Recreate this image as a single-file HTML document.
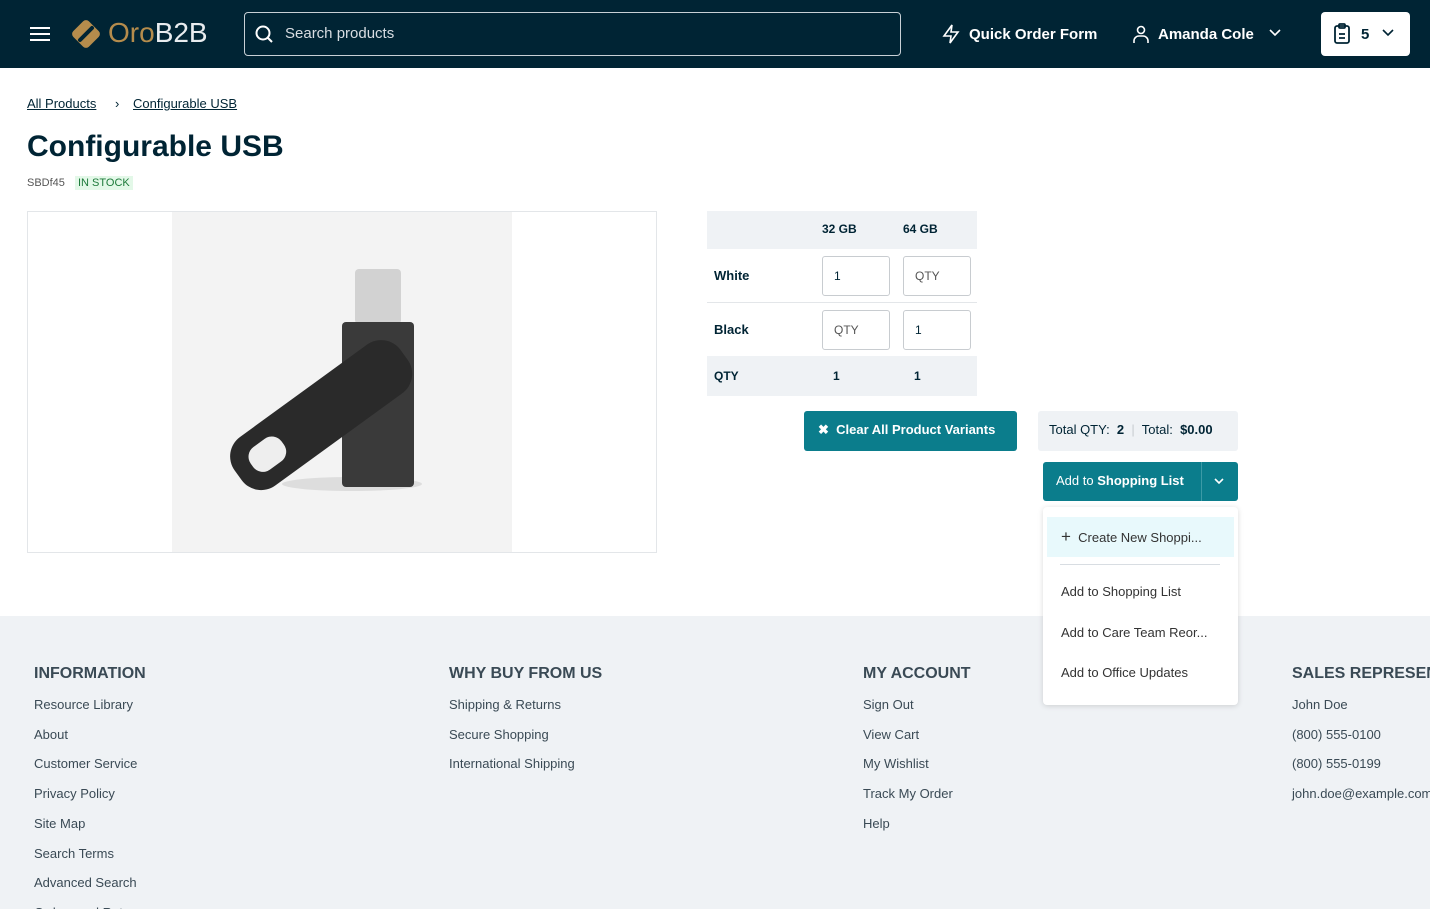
<!DOCTYPE html>
<html style="overflow:hidden;height:909px"><head><meta charset="utf-8"><style>
*{box-sizing:border-box;margin:0;padding:0}
body{width:1430px;height:909px;overflow:hidden;font-family:"Liberation Sans",sans-serif;color:#002434;background:#fff;position:relative}
.a{position:absolute}
.hdr{left:0;top:0;width:1430px;height:68px;background:#002434}
.w{color:#fff;font-weight:bold;font-size:15px}
.ft{color:#3a4a55;font-size:13px}
.fh{font-size:16px;font-weight:bold;color:#3a4a55}
.in{position:absolute;width:68px;height:40px;border:1px solid #c8ccd0;border-radius:3px;font-size:12px;padding:12px 11px;color:#555}
.dd{font-size:13px;color:#333}
</style></head><body>
<div class="a hdr"></div>
<div class="a" style="left:30px;top:27px;width:20px;height:2px;background:#fff;box-shadow:0 6px 0 #fff,0 12px 0 #fff"></div>
<svg class="a" style="left:69px;top:17px" width="34" height="34" viewBox="0 0 34 34"><rect x="6" y="6" width="22" height="22" rx="4" transform="rotate(45 17 17)" fill="#b58c4c"/><path d="M11 23 L23 11" stroke="#002434" stroke-width="4" stroke-linecap="round"/></svg>
<div class="a" style="left:108px;top:17px;font-size:28px;color:#b58c4c">Oro<span style="color:#e8ecef">B2B</span></div>
<div class="a" style="left:244px;top:12px;width:657px;height:44px;border:1px solid #c8d0d6;border-radius:4px"></div>
<svg class="a" style="left:255px;top:25px" width="18" height="18" viewBox="0 0 18 18" fill="none" stroke="#fff" stroke-width="2"><circle cx="8" cy="8" r="6.5"/><path d="M13 13l4 4"/></svg>
<div class="a" style="left:285px;top:25px;font-size:15px;color:#d8dde2">Search products</div>
<svg class="a" style="left:941px;top:24px" width="20" height="20" viewBox="0 0 20 20" fill="none" stroke="#fff" stroke-width="1.6"><path d="M11 1L3 12h7l-1 7 8-11h-7z"/></svg>
<div class="a w" style="left:969px;top:26px">Quick Order Form</div>
<svg class="a" style="left:1131px;top:24px" width="20" height="20" viewBox="0 0 20 20" fill="none" stroke="#fff" stroke-width="1.6"><circle cx="10" cy="6" r="3.5"/><path d="M3 19v-2a5 5 0 0 1 5-5h4a5 5 0 0 1 5 5v2"/></svg>
<div class="a w" style="left:1158px;top:26px">Amanda Cole</div>
<svg class="a" style="left:1268px;top:28px" width="14" height="10" viewBox="0 0 14 10" fill="none" stroke="#fff" stroke-width="1.6"><path d="M2 2l5 5 5-5"/></svg>
<div class="a" style="left:1321px;top:12px;width:89px;height:44px;background:#fff;border-radius:4px"></div>
<svg class="a" style="left:1333px;top:23px" width="18" height="22" viewBox="0 0 18 22" fill="none" stroke="#002434" stroke-width="1.8"><rect x="2" y="3" width="14" height="17" rx="2"/><rect x="6" y="1" width="6" height="4" rx="1"/><path d="M6 11h6M6 15h6"/></svg>
<div class="a" style="left:1361px;top:26px;font-weight:bold;font-size:15px">5</div>
<svg class="a" style="left:1381px;top:28px" width="14" height="10" viewBox="0 0 14 10" fill="none" stroke="#002434" stroke-width="1.6"><path d="M2 2l5 5 5-5"/></svg>

<div class="a" style="left:27px;top:96px;font-size:13px;text-decoration:underline">All Products</div>
<div class="a" style="left:115px;top:96px;font-size:13px">›</div>
<div class="a" style="left:133px;top:96px;font-size:13px;text-decoration:underline">Configurable USB</div>
<div class="a" style="left:27px;top:130px;font-size:30px;font-weight:bold">Configurable USB</div>
<div class="a" style="left:27px;top:177px;font-size:11px;color:#555">SBDf45</div>
<div class="a" style="left:75px;top:176px;font-size:11px;color:#1d7a3a;background:#e3f8e8;padding:1px 3px">IN STOCK</div>

<div class="a" style="left:27px;top:211px;width:630px;height:342px;border:1px solid #e3e6e9"></div>
<div class="a" style="left:172px;top:212px;width:340px;height:340px;background:#f3f3f3"></div>
<svg class="a" style="left:172px;top:212px" width="340" height="340" viewBox="0 0 340 340">
<ellipse cx="180" cy="272" rx="70" ry="7" fill="#ddd"/>
<rect x="183" y="57" width="46" height="55" rx="4" fill="#d2d2d2"/>
<rect x="170" y="110" width="72" height="165" rx="4" fill="#3a3a3a"/>
<g transform="rotate(-36 150 200)"><rect x="45" y="172" width="205" height="60" rx="24" fill="#2a2a2a"/><rect x="62" y="188" width="38" height="28" rx="12" fill="#eee"/></g>
</svg>

<div class="a" style="left:707px;top:211px;width:270px;height:38px;background:#eff2f5"></div>
<div class="a" style="left:822px;top:222px;font-size:12px;font-weight:bold">32 GB</div>
<div class="a" style="left:903px;top:222px;font-size:12px;font-weight:bold">64 GB</div>
<div class="a" style="left:714px;top:268px;font-size:13px;font-weight:bold">White</div>
<div class="in" style="left:822px;top:256px;color:#002434">1</div>
<div class="in" style="left:903px;top:256px">QTY</div>
<div class="a" style="left:707px;top:302px;width:270px;height:1px;background:#e3e6e9"></div>
<div class="a" style="left:714px;top:322px;font-size:13px;font-weight:bold">Black</div>
<div class="in" style="left:822px;top:310px">QTY</div>
<div class="in" style="left:903px;top:310px;color:#002434">1</div>
<div class="a" style="left:707px;top:356px;width:270px;height:40px;background:#eff2f5"></div>
<div class="a" style="left:714px;top:369px;font-size:12px;font-weight:bold">QTY</div>
<div class="a" style="left:833px;top:369px;font-size:12px;font-weight:bold">1</div>
<div class="a" style="left:914px;top:369px;font-size:12px;font-weight:bold">1</div>

<div class="a" style="left:804px;top:411px;width:213px;height:40px;background:#0b7d8c;border-radius:3px;color:#fff;font-weight:bold;font-size:13px;padding:11px 0 0 14px">✖&nbsp; Clear All Product Variants</div>
<div class="a" style="left:1038px;top:411px;width:200px;height:40px;background:#eff2f5;border-radius:3px;font-size:13px;padding:11px 0 0 11px">Total QTY:&nbsp; <b>2</b> <span style="color:#c8ccd0">&nbsp;|&nbsp;</span> Total:&nbsp; <b>$0.00</b></div>
<div class="a" style="left:1043px;top:462px;width:195px;height:39px;background:#0b7d8c;border-radius:3px"></div>
<div class="a" style="left:1056px;top:473px;color:#fff;font-size:13px">Add to <b>Shopping List</b></div>
<div class="a" style="left:1201px;top:462px;width:1px;height:39px;background:#3c9aa6"></div>
<svg class="a" style="left:1213px;top:477px" width="12" height="9" viewBox="0 0 12 9" fill="none" stroke="#fff" stroke-width="1.6"><path d="M2 2l4 4 4-4"/></svg>
<div class="a" style="left:1043px;top:507px;width:195px;height:198px;background:#fff;border-radius:4px;box-shadow:0 1px 6px rgba(0,0,0,.15);z-index:2"></div>
<div class="a" style="left:1047px;top:517px;width:187px;height:40px;background:#e8f9fc;z-index:3"></div>
<div class="a dd" style="left:1061px;top:527px;z-index:4"><span style="font-size:17px">+</span>&nbsp; Create New Shoppi...</div>
<div class="a" style="left:1060px;top:564px;width:160px;height:1px;background:#d8dde2;z-index:4"></div>
<div class="a dd" style="left:1061px;top:584px;z-index:4">Add to Shopping List</div>
<div class="a dd" style="left:1061px;top:625px;z-index:4">Add to Care Team Reor...</div>
<div class="a dd" style="left:1061px;top:665px;z-index:4">Add to Office Updates</div>

<div class="a" style="left:0;top:616px;width:1430px;height:293px;background:#eff2f5"></div>
<div class="a fh" style="left:34px;top:665px">INFORMATION</div>
<div class="a ft" style="left:34px;top:690px;line-height:29.7px">Resource Library<br>About<br>Customer Service<br>Privacy Policy<br>Site Map<br>Search Terms<br>Advanced Search<br>Orders and Returns</div>
<div class="a fh" style="left:449px;top:665px">WHY BUY FROM US</div>
<div class="a ft" style="left:449px;top:690px;line-height:29.7px">Shipping &amp; Returns<br>Secure Shopping<br>International Shipping</div>
<div class="a fh" style="left:863px;top:665px">MY ACCOUNT</div>
<div class="a ft" style="left:863px;top:690px;line-height:29.7px">Sign Out<br>View Cart<br>My Wishlist<br>Track My Order<br>Help</div>
<div class="a fh" style="left:1292px;top:665px;white-space:nowrap">SALES REPRESENTATIVE</div>
<div class="a ft" style="left:1292px;top:690px;line-height:29.7px;white-space:nowrap">John Doe<br>(800) 555-0100<br>(800) 555-0199<br>john.doe@example.com</div>
</body></html>
